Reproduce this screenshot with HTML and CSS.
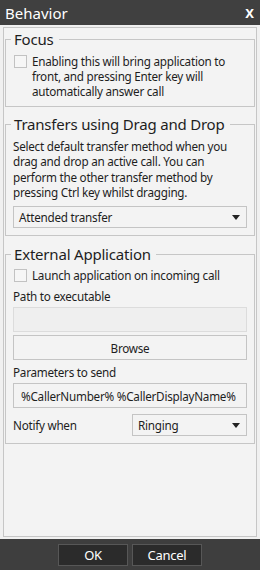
FILE: index.html
```html
<!DOCTYPE html>
<html lang="en">
<head>
    <meta charset="UTF-8">
    <title>Behavior</title>
    <link rel="stylesheet" href="styles.css">
</head>
<body>
    <div class="titlebar">
        <span>Behavior</span>
        <span class="close">X</span>
    </div>

    <div class="content">
        <div class="panel">
            <!-- focus -->
            <fieldset class="group">
                <legend>Focus</legend>
                <div class="check-row">
                    <span class="checkbox"></span>
                    <span>Enabling this will bring application to<br>front, and pressing Enter key will<br>automatically answer call</span>
                </div>
            </fieldset>

            <!-- transfers -->
            <fieldset class="group transfers">
                <legend>Transfers using Drag and Drop</legend>
                <p class="desc">Select default transfer method when you<br>drag and drop an active call. You can<br>perform the other transfer method by<br>pressing Ctrl key whilst dragging.</p>
                <div class="select">
                    <span>Attended transfer</span>
                    <span class="arrow"></span>
                </div>
            </fieldset>

            <!-- external application -->
            <fieldset class="group">
                <legend>External Application</legend>
                <div class="check-row single">
                    <span class="checkbox"></span>
                    <span>Launch application on incoming call</span>
                </div>
                <div class="label">Path to executable</div>
                <div class="input disabled"></div>
                <div class="button">Browse</div>
                <div class="label params">Parameters to send</div>
                <div class="input">%CallerNumber% %CallerDisplayName%</div>
                <div class="notify-row">
                    <span>Notify when</span>
                    <div class="select small">
                        <span>Ringing</span>
                        <span class="arrow"></span>
                    </div>
                </div>
            </fieldset>
        </div>
    </div>

    <div class="footer">
        <div class="dlg-btn">OK</div>
        <div class="dlg-btn">Cancel</div>
    </div>
</body>
</html>
```

FILE: styles.css
```css
* {
    margin: 0px;
    padding: 0px;
    box-sizing: border-box;
}
html, body {
    height: 100%;
}
body {
    display: flex;
    flex-direction: column;
    background-color: #f0f0f0;
    font-family: "Noto Sans", "Open Sans", sans-serif;
    font-size: 11.7px;
    letter-spacing: -0.25px;
    color: #1e1e1e;
}

.titlebar {
    height: 25px;
    display: flex;
    align-items: center;
    justify-content: space-between;
    padding: 0px 6px 0px 5px;
    background-color: #404040;
    color: #ffffff;
    font-size: 15px;
    letter-spacing: 0px;
}
.titlebar .close {
    font-weight: bold;
    font-size: 13px;
}

.content {
    flex: 1;
    padding: 2px 3px;
}
.panel {
    height: 100%;
    border: 1px solid #c6c6c6;
    background-color: #f3f3f3;
    padding: 1px;
}

.group {
    min-width: 0px;
    border: 1px solid #c6c6c6;
    padding: 0px 7px 7px 7px;
    margin-bottom: 7px;
}
.group.transfers {
    margin-bottom: 8px;
}
.group legend {
    font-size: 15px;
    line-height: 20px;
    letter-spacing: -0.2px;
    padding: 0px 5px 0px 3px;
    margin-left: -2px;
}

.check-row {
    display: flex;
    align-items: flex-start;
    gap: 5px;
    line-height: 15px;
    margin-top: 5px;
}
.check-row .checkbox {
    width: 13px;
    height: 13px;
    margin: 1px 0px 0px 1px;
    flex-shrink: 0;
    border: 1px solid #c2c2c2;
    background-color: #f6f6f6;
}
.check-row.single {
    margin-top: 4px;
}

.desc {
    line-height: 15.3px;
    margin-top: 5px;
}

.select {
    height: 22px;
    margin-top: 6px;
    display: flex;
    align-items: center;
    justify-content: space-between;
    padding: 0px 6px 0px 5px;
    border: 1px solid #c4c4c4;
    background-color: #f3f3f3;
}
.select .arrow {
    width: 0px;
    height: 0px;
    border-left: 4px solid transparent;
    border-right: 4px solid transparent;
    border-top: 5px solid #222222;
}

.label {
    line-height: 15px;
    margin-top: 6px;
}
.label.params {
    margin-top: 5px;
}
.input {
    height: 25px;
    margin-top: 3px;
    padding: 0px 7px;
    display: flex;
    align-items: center;
    overflow: hidden;
    border: 1px solid #c4c4c4;
    background-color: #f3f3f3;
    white-space: nowrap;
}
.input.disabled {
    border-color: #dcdcdc;
    background-color: #efefef;
}
.button {
    height: 25px;
    margin-top: 3px;
    display: flex;
    align-items: center;
    justify-content: center;
    border: 1px solid #c4c4c4;
    background-color: #f3f3f3;
}

.notify-row {
    display: flex;
    align-items: center;
    justify-content: space-between;
    margin-top: 6px;
}
.notify-row .select {
    margin-top: 0px;
    width: 115px;
}

.footer {
    height: 31px;
    display: flex;
    align-items: center;
    justify-content: center;
    gap: 4px;
    background-color: #3e3e3e;
}
.dlg-btn {
    width: 70px;
    height: 22px;
    display: flex;
    align-items: center;
    justify-content: center;
    border: 1px solid #575757;
    background-color: #2b2b2b;
    color: #ffffff;
    font-size: 13px;
}
```
